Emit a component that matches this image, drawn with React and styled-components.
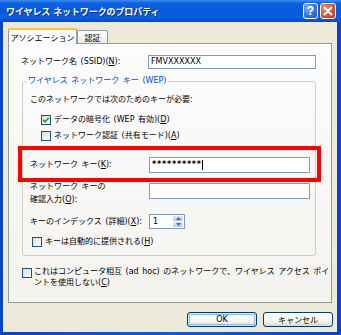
import styled, { createGlobalStyle } from 'styled-components';

const GlobalStyle = createGlobalStyle`
  html, body {
    margin: 0;
    padding: 0;
  }
  body {
    font-family: "DejaVu Sans", "Noto Sans CJK JP", sans-serif;
    font-size: 8px;
    word-spacing: 1px;
    color: #000;
  }
`;

export default function App() {
  return (
    <>
      <GlobalStyle />
      <Window>
        <TitleBar>
          <Title>ワイヤレス ネットワークのプロパティ</Title>
          <CaptionButton $kind="help">?</CaptionButton>
          <CaptionButton $kind="close">
            <svg width="10" height="10" viewBox="0 0 10 10">
              <path d="M1.5 1.5 L8.5 8.5 M8.5 1.5 L1.5 8.5" stroke="#fff" strokeWidth="2" strokeLinecap="round" />
            </svg>
          </CaptionButton>
        </TitleBar>
        <Client>
          <Tabs>
            <Tab $active>アソシエーション</Tab>
            <Tab>認証</Tab>
          </Tabs>
          <Panel>
            <Row $height={14}>
              <Label $width={127}>
                ネットワーク名 (SSID)(<u>N</u>):
              </Label>
              <Field $grow>FMVXXXXXX</Field>
            </Row>
            <Group>
              <Legend>ワイヤレス ネットワーク キー (WEP)</Legend>
              <Row $height={10}>このネットワークでは次のためのキーが必要:</Row>
              <Row $height={10} $top={10} $indent={11}>
                <CheckBox $checked />
                <CheckLabel>
                  データの暗号化 (WEP 有効)(<u>D</u>)
                </CheckLabel>
              </Row>
              <Row $height={10} $top={6} $indent={11}>
                <CheckBox />
                <CheckLabel>
                  ネットワーク認証 (共有モード)(<u>A</u>)
                </CheckLabel>
              </Row>
              <Row $height={16} $top={16}>
                <Label $width={119}>
                  ネットワーク キー(<u>K</u>):
                </Label>
                <Field $width={161} $height={16} $secret>
                  **********
                  <Caret />
                </Field>
              </Row>
              <Row $top={7} $start>
                <Label $width={119} $lines>
                  ネットワーク キーの
                  <br />
                  確認入力(<u>O</u>):
                </Label>
                <Field $width={161} $height={16} $offset={3} />
              </Row>
              <Row $height={15} $top={8}>
                <Label $width={119}>
                  キーのインデックス (詳細)(<u>X</u>):
                </Label>
                <Spin>
                  <SpinValue>1</SpinValue>
                  <SpinButtons>
                    <SpinArrow>
                      <svg width="5" height="3" viewBox="0 0 5 3">
                        <path d="M0 3 L2.5 0 L5 3 Z" fill="#4D6185" />
                      </svg>
                    </SpinArrow>
                    <SpinArrow>
                      <svg width="5" height="3" viewBox="0 0 5 3">
                        <path d="M0 0 L2.5 3 L5 0 Z" fill="#4D6185" />
                      </svg>
                    </SpinArrow>
                  </SpinButtons>
                </Spin>
              </Row>
              <Row $height={10} $top={8} $indent={2}>
                <CheckBox />
                <CheckLabel>
                  キーは自動的に提供される(<u>H</u>)
                </CheckLabel>
              </Row>
            </Group>
            <Row $top={10} $start $indent={1}>
              <CheckBox $offset={2} />
              <WrapLabel>
                これはコンピュータ相互 (ad hoc) のネットワークで、ワイヤレス アクセス ポイ
                <br />
                ントを使用しない(<u>C</u>)
              </WrapLabel>
            </Row>
            <Highlight />
          </Panel>
          <ButtonRow>
            <Button $default>OK</Button>
            <Button>キャンセル</Button>
          </ButtonRow>
        </Client>
      </Window>
    </>
  );
}

function CheckBox({ $checked, $offset }) {
  return (
    <Box $offset={$offset}>
      {$checked && (
        <svg width="8" height="8" viewBox="0 0 8 8">
          <path d="M1.2 3.8 L3.2 5.8 L6.8 1.8" stroke="#21A121" strokeWidth="1.7" fill="none" />
        </svg>
      )}
    </Box>
  );
}

const Window = styled.div`
  width: 341px;
  height: 335px;
  display: flex;
  flex-direction: column;
  background: linear-gradient(90deg, #0843C8, #0A5BE0 50%, #0843C8);
`;

const TitleBar = styled.div`
  height: 22px;
  flex: none;
  display: flex;
  align-items: center;
  gap: 2px;
  padding: 0 5px 0 6px;
  background: linear-gradient(#3E8DF6 0%, #0F63E4 14%, #0758DA 45%, #0A5EE0 80%, #0648CC 100%);
`;

const Title = styled.div`
  flex: 1;
  color: #fff;
  font-family: "Noto Sans CJK JP", sans-serif;
  font-weight: bold;
  font-size: 9px;
  text-shadow: 1px 1px 0 #0B2A8C;
  letter-spacing: -0.1px;
`;

const CaptionButton = styled.div`
  width: ${({ $kind }) => ($kind === 'close' ? 16 : 15)}px;
  height: 16px;
  box-sizing: border-box;
  border: 1px solid #fff;
  border-radius: 3px;
  display: flex;
  align-items: center;
  justify-content: center;
  color: #fff;
  font: bold 12px "Liberation Sans", sans-serif;
  background: ${({ $kind }) =>
    $kind === 'close'
      ? 'radial-gradient(circle at 30% 30%, #F0906A, #DA4D24 60%, #C03810)'
      : 'radial-gradient(circle at 30% 30%, #7FAEF8, #2F6FE4 60%, #1D56CF)'};
`;

const Client = styled.div`
  flex: 1;
  margin: 0 4px 3px 3px;
  padding: 6px 5px 0 5px;
  background: #ECE9D8;
  display: flex;
  flex-direction: column;
`;

const Tabs = styled.div`
  height: 15px;
  display: flex;
  align-items: flex-end;
  position: relative;
  z-index: 1;
`;

const Tab = styled.div`
  box-sizing: border-box;
  width: ${({ $active }) => ($active ? 69 : 31)}px;
  height: ${({ $active }) => ($active ? 16 : 13)}px;
  margin-bottom: ${({ $active }) => ($active ? -1 : 0)}px;
  border: 1px solid #919B9C;
  border-bottom: none;
  border-top: ${({ $active }) => ($active ? '2px solid #FFC83C' : '1px solid #919B9C')};
  border-radius: 2px 2px 0 0;
  background: ${({ $active }) => ($active ? '#FCFCFE' : 'linear-gradient(#FFFFFF, #ECEBE6)')};
  display: flex;
  align-items: center;
  justify-content: center;
  white-space: nowrap;
`;

const Panel = styled.div`
  position: relative;
  box-sizing: border-box;
  height: 260px;
  border: 1px solid #919B9C;
  background: linear-gradient(#FCFCFE, #F4F3EE);
  padding: 11px 15px 0 12px;
  display: flex;
  flex-direction: column;
`;

const Row = styled.div`
  display: flex;
  align-items: ${({ $start }) => ($start ? 'flex-start' : 'center')};
  height: ${({ $height }) => ($height ? `${$height}px` : 'auto')};
  margin-top: ${({ $top }) => $top || 0}px;
  padding-left: ${({ $indent }) => $indent || 0}px;
  line-height: 10px;
  white-space: nowrap;
`;

const Label = styled.div`
  flex: none;
  width: ${({ $width }) => $width}px;
  line-height: ${({ $lines }) => ($lines ? 13 : 10)}px;
  white-space: nowrap;
`;

const Field = styled.div`
  box-sizing: border-box;
  flex: ${({ $grow }) => ($grow ? 1 : 'none')};
  width: ${({ $width }) => ($width ? `${$width}px` : 'auto')};
  height: ${({ $height }) => $height || 14}px;
  margin-top: ${({ $offset }) => $offset || 0}px;
  border: 1px solid #7F9DB9;
  background: #fff;
  padding: 0 2px;
  display: flex;
  align-items: center;
  letter-spacing: ${({ $secret }) => ($secret ? '0.8px' : 'normal')};
  font-weight: ${({ $secret }) => ($secret ? 'bold' : 'normal')};
`;

const Caret = styled.span`
  width: 1px;
  height: 10px;
  background: #000;
`;

const Group = styled.fieldset`
  margin: 7px 0 0 1px;
  padding: 9px 0 8px 7px;
  border: 1px solid #D0D0BF;
  border-radius: 3px;
  min-inline-size: 0;
`;

const Legend = styled.legend`
  margin-left: -4px;
  padding: 0 2px;
  color: #0046D5;
  line-height: 10px;
`;

const Box = styled.span`
  flex: none;
  box-sizing: border-box;
  width: 10px;
  height: 10px;
  margin-top: ${({ $offset }) => $offset || 0}px;
  border: 1px solid #1C5180;
  background: linear-gradient(135deg, #DCDCD7, #FFFFFF);
  display: flex;
  align-items: center;
  justify-content: center;
`;

const CheckLabel = styled.span`
  margin-left: 3px;
`;

const WrapLabel = styled.span`
  margin-left: 2px;
  line-height: 11px;
`;

const Spin = styled.div`
  box-sizing: border-box;
  width: 36px;
  height: 15px;
  border: 1px solid #7F9DB9;
  background: #fff;
  display: flex;
`;

const SpinValue = styled.div`
  flex: 1;
  padding-left: 3px;
  display: flex;
  align-items: center;
`;

const SpinButtons = styled.div`
  width: 10px;
  display: flex;
  flex-direction: column;
  gap: 1px;
  padding: 1px;
`;

const SpinArrow = styled.div`
  flex: 1;
  border-radius: 1px;
  background: linear-gradient(#DCE6FC, #B4C8F6);
  display: flex;
  align-items: center;
  justify-content: center;
`;

const Highlight = styled.div`
  position: absolute;
  left: 9px;
  top: 102px;
  width: 303px;
  height: 36px;
  box-sizing: border-box;
  border: 4px solid #FF0000;
  pointer-events: none;
`;

const ButtonRow = styled.div`
  display: flex;
  justify-content: flex-end;
  gap: 6px;
  margin: 9px -1px 0 0;
`;

const Button = styled.div`
  box-sizing: border-box;
  width: 70px;
  height: 15px;
  border: 1px solid #003C74;
  border-radius: 3px;
  background: linear-gradient(#FFFFFF, #F3F2EE 70%, #D9D4C8);
  box-shadow: ${({ $default }) =>
    $default ? 'inset 0 0 0 1px #CEE7FF, inset 0 0 0 2px #98B8EA' : 'none'};
  display: flex;
  align-items: center;
  justify-content: center;
`;
